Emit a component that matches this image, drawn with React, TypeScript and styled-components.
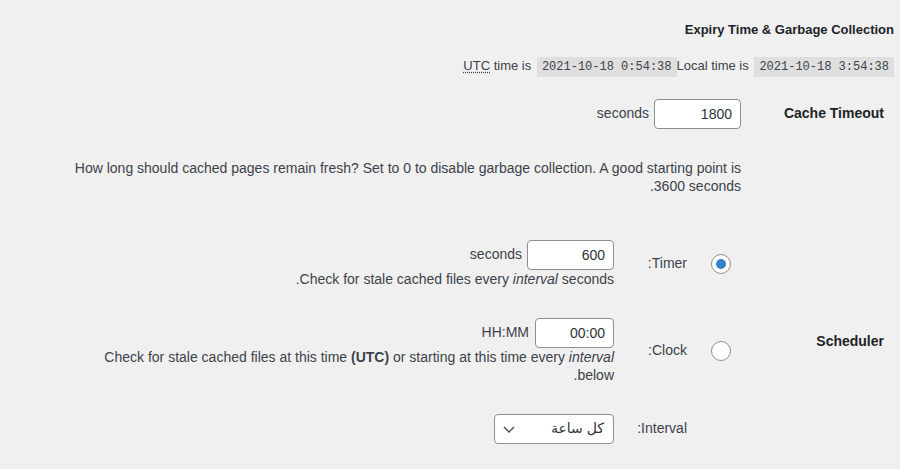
import React from 'react';
import styled, { createGlobalStyle } from 'styled-components';

const Global = createGlobalStyle`
  html, body { margin: 0; padding: 0; background: #f0f0f1; }
  body {
    font-family: "Liberation Sans", "DejaVu Sans", Arial, sans-serif;
    font-size: 13px;
    color: #3c434a;
    line-height: 1.4;
  }
`;

const Page = styled.div`
  direction: rtl;
  padding: 21px 6px 0 60px;
`;

const Title = styled.h3`
  margin: 0;
  font-size: 13px;
  line-height: 18px;
  font-weight: 700;
  color: #1d2327;
`;

const TimeLine = styled.p`
  margin: 17px 0 0;
  direction: ltr;
  text-align: right;
  font-size: 13px;
  line-height: 20px;
`;

const Abbr = styled.abbr`
  text-decoration: underline dotted;
  text-underline-offset: 2px;
`;

const Code = styled.code`
  display: inline-block;
  font-family: "Liberation Mono", monospace;
  font-size: 12px;
  line-height: 15px;
  padding: 3px 5px 2px;
  background: rgba(0, 0, 0, 0.07);
  margin-left: 2px;
`;

const FormTable = styled.div`
  display: grid;
  grid-template-columns: 143px 1fr;
  margin-top: 7px;
`;

const Th = styled.div`
  display: flex;
  align-items: center;
  padding-right: 10px;
  font-size: 14px;
  font-weight: 700;
  color: #1d2327;
`;

const Td = styled.div`
  padding: 15px 10px;
`;

const InputLine = styled.div<{ $gap?: number }>`
  display: flex;
  align-items: center;
  gap: ${(p) => p.$gap ?? 5}px;
  font-size: 14px;
`;

const TextInput = styled.input<{ $w: number }>`
  box-sizing: border-box;
  width: ${(p) => p.$w}px;
  height: 30px;
  margin: 0;
  padding: 0 8px;
  border: 1px solid #8c8f94;
  border-radius: 4px;
  background: #fff;
  color: #2c3338;
  font-family: inherit;
  font-size: 14px;
  text-align: right;
  direction: rtl;
  outline: none;
`;

const Description = styled.p`
  margin: 0;
  font-size: 14px;
  line-height: 18px;
`;

const Inner = styled.div`
  display: grid;
  grid-template-columns: 42px 85px auto;
  justify-content: start;
  align-items: center;
`;

const RadioCell = styled.div`
  padding: 15px 10px 15px 0;
  display: flex;
  align-items: center;
`;

const Radio = styled.span<{ $checked?: boolean }>`
  box-sizing: border-box;
  width: 20px;
  height: 20px;
  border-radius: 50%;
  border: 1px solid #8c8f94;
  background: #fff;
  display: flex;
  align-items: center;
  justify-content: center;
  &::before {
    content: '';
    width: 10px;
    height: 10px;
    border-radius: 50%;
    background: ${(p) => (p.$checked ? '#3582c4' : 'transparent')};
  }
`;

const LabelCell = styled.div`
  padding: 15px 12px 15px 0;
  font-size: 14px;
`;

const FieldCell = styled.div`
  padding: 15px 0;
  width: 530px;
`;

const SelectBox = styled.div`
  box-sizing: border-box;
  width: 120px;
  height: 30px;
  border: 1px solid #8c8f94;
  border-radius: 4px;
  background: #fff;
  display: flex;
  align-items: center;
  justify-content: space-between;
  padding: 0 9px 0 8px;
  font-size: 14px;
  color: #2c3338;
`;

const Chevron = () => (
  <svg width="12" height="7" viewBox="0 0 12 7" aria-hidden>
    <path d="M1 1l5 5 5-5" fill="none" stroke="#50575e" strokeWidth="1.5" />
  </svg>
);

export default function App() {
  return (
    <>
      <Global />
      <Page>
        <Title>Expiry Time &amp; Garbage Collection</Title>
        <TimeLine>
          <Abbr title="Coordinated Universal Time">UTC</Abbr> time is <Code>2021-10-18 0:54:38</Code>Local time is <Code>2021-10-18 3:54:38</Code>
        </TimeLine>
        <FormTable>
          <Th>Cache Timeout</Th>
          <Td>
            <InputLine>
              <TextInput $w={87} defaultValue="1800" />
              <span>seconds</span>
            </InputLine>
          </Td>
          <Th />
          <Td>
            <Description>
              How long should cached pages remain fresh? Set to 0 to disable garbage collection. A good starting point is 3600 seconds.
            </Description>
          </Td>
          <Th>Scheduler</Th>
          <Td>
            <Inner>
              <RadioCell><Radio $checked /></RadioCell>
              <LabelCell>Timer:</LabelCell>
              <FieldCell>
                <InputLine>
                  <TextInput $w={87} defaultValue="600" />
                  <span>seconds</span>
                </InputLine>
                <Description>
                  Check for stale cached files every <em>interval</em> seconds.
                </Description>
              </FieldCell>

              <RadioCell><Radio /></RadioCell>
              <LabelCell>Clock:</LabelCell>
              <FieldCell>
                <InputLine $gap={6}>
                  <TextInput $w={79} defaultValue="00:00" />
                  <span>HH:MM</span>
                </InputLine>
                <Description>
                  Check for stale cached files at this time <strong>(UTC)</strong> or starting at this time every <em>interval</em> below.
                </Description>
              </FieldCell>

              <RadioCell />
              <LabelCell>Interval:</LabelCell>
              <FieldCell>
                <SelectBox>
                  <span>كل ساعة</span>
                  <Chevron />
                </SelectBox>
              </FieldCell>
            </Inner>
          </Td>
        </FormTable>
      </Page>
    </>
  );
}
